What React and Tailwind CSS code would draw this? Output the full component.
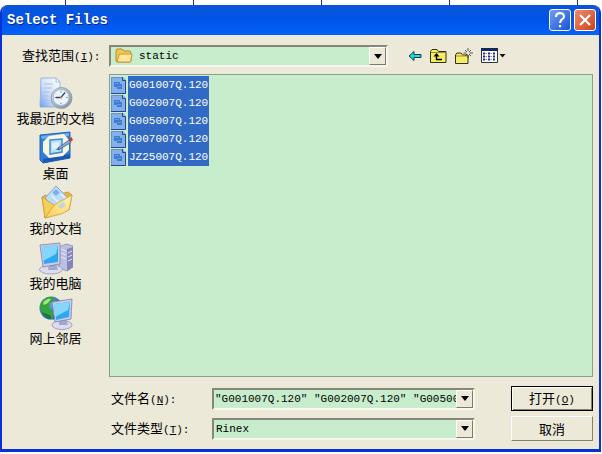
import { useState } from 'react';

const PlaceRecent = () => (
    <svg viewBox="0 0 34 34" className="w-[34px] h-[34px]" aria-hidden="true">
        <defs>
            <linearGradient id="recent-page" x1="0" y1="1" x2="1" y2="0">
                <stop offset="0" stopColor="#6f9fe8" />
                <stop offset=".45" stopColor="#cfe0f8" />
                <stop offset="1" stopColor="#fff" />
            </linearGradient>
            <linearGradient id="recent-rim" x1="0" y1="0" x2="1" y2="1">
                <stop offset="0" stopColor="#d8dfe8" />
                <stop offset="1" stopColor="#7f8b98" />
            </linearGradient>
        </defs>
        <path d="M2 2h15l4 4v25H1z" fill="url(#recent-page)" stroke="#8ba8d8" strokeWidth=".8" />
        <path d="M17 2v4h4z" fill="#fff" stroke="#8ba8d8" strokeWidth=".7" />
        <path d="M5 8h9M5 12h8M5 16h6M5 20h5M5 24h5" stroke="#a9bfe2" />
        <circle cx="22.500" cy="22" r="10.500" fill="url(#recent-rim)" stroke="#8c97a4" strokeWidth=".8" />
        <circle cx="22" cy="21.500" r="8" fill="#eaf5ff" stroke="#a4b8ce" />
        <path d="M22 15v1.600M22 26.500v1.500M15.500 21.500h1.600M27 21.500h1.600" stroke="#5b83bb" />
        <path d="M26 16.500l-4 5h-5" fill="none" stroke="#33475f" strokeWidth="1.300" />
        <circle cx="22" cy="21.500" r="1" fill="#d98339" />
    </svg>
);

const PlaceDesktop = () => (
    <svg viewBox="0 0 34 34" className="w-[34px] h-[34px]" aria-hidden="true">
        <path d="M1 4l30-3v26L4 32l-3-3z" fill="#2f7fdc" stroke="#2364b8" />
        <path d="M2 5l28-3v3L3 8z" fill="#6cb0f0" />
        <path d="M4 28l27-5v4L4 32z" fill="#1c58b4" />
        <path d="M10 5l15-2 5 6v10l-6 6-14 2-6-6V11z" fill="#faf8dc" />
        <path d="M11 9l12-1v13l-12 2z" fill="#b9def9" stroke="#3c8bd9" strokeWidth="1.500" />
        <path d="M13 12l7-1v4l-7 5z" fill="#e3f3fe" />
        <path d="M19 17l11-8 2 2.500-12 7z" fill="#8fa9d6" stroke="#3c5890" strokeWidth=".8" />
        <path d="M29.500 8l3-2 1.500 3-2.500 2z" fill="#c8402e" />
        <path d="M17 19l2.500-2 1 1.500z" fill="#23385f" />
    </svg>
);

const PlaceDocuments = () => (
    <svg viewBox="0 0 34 34" className="w-[34px] h-[34px]" aria-hidden="true">
        <defs>
            <linearGradient id="docs-flap" x1="0" y1="1" x2="1" y2="0">
                <stop offset="0" stopColor="#f7cf55" />
                <stop offset="1" stopColor="#fff3b8" />
            </linearGradient>
        </defs>
        <path d="M3 11l4-2 3 2 19-5 4 3-3 15-24 8z" fill="#e9b840" stroke="#b98a25" strokeWidth=".7" />
        <path d="M17 0l13 13-12 11L6 12z" fill="#bcdcf8" stroke="#81aad6" />
        <path d="M17 3l3.500 3.500-3.500 3.500-3.500-3.500z" fill="#7fb0e6" />
        <path d="M12 9l9 9M22 8l4 4" stroke="#e6f4ff" strokeWidth="1.500" />
        <path d="M3 11l3 21 8-10 1-3z" fill="#f5cf5c" stroke="#ca9a2d" strokeWidth=".7" />
        <path d="M6 32l9-13 18-10-3 15-8 4z" fill="url(#docs-flap)" stroke="#cfa13a" strokeWidth=".8" />
        <path d="M19 20l5-4 3 3-5 4z" fill="#bdd7df" />
    </svg>
);

const PlaceComputer = () => (
    <svg viewBox="0 0 34 34" className="w-[34px] h-[34px]" aria-hidden="true">
        <path d="M20 6l7-3 7 2v21l-6 4-8-3z" fill="#bcbfe0" stroke="#8184b2" strokeWidth=".7" />
        <path d="M28 8l6-2v20l-6 4z" fill="#8386ba" />
        <path d="M22 8l5 2M22 12l5 2M22 16l5 2M29 12l4-2M29 16l4-2M29 20l4-2" stroke="#e3e6fb" />
        <ellipse cx="12" cy="28.500" rx="11.500" ry="4.500" fill="#dcdcf0" stroke="#9496ba" strokeWidth=".8" />
        <path d="M10 23h7l2 6H9z" fill="#a5a7ce" />
        <path d="M1 4l20-2v21L4 26z" fill="#c9cde8" stroke="#7c80ac" strokeWidth=".8" />
        <path d="M3 6l16-2v17L5 23z" fill="#2fa8f2" />
        <path d="M3 6l16-2-2 9-13 7z" fill="#86d6fb" />
    </svg>
);

const PlaceNetwork = () => (
    <svg viewBox="0 0 34 34" className="w-[34px] h-[34px]" aria-hidden="true">
        <defs>
            <radialGradient id="globe" cx=".35" cy=".3" r=".75">
                <stop offset="0" stopColor="#6db4f5" />
                <stop offset="1" stopColor="#1450ac" />
            </radialGradient>
        </defs>
        <circle cx="12" cy="12" r="11.500" fill="url(#globe)" />
        <path d="M1 10C3 3 9 0 14 1l2 3-5 3-1 5 4 3v8c-8 0-13-6-13-13z" fill="#35a23c" />
        <path d="M4 7c2-3 5-5 8-4l-3 4-4 2z" fill="#a8e680" />
        <path d="M3 16c2 4 5 6 9 7v-3z" fill="#1d7340" />
        <ellipse cx="23" cy="29" rx="10" ry="4.500" fill="#dcdcf0" stroke="#9092b6" strokeWidth=".8" />
        <path d="M20 23h7l2 6h-9z" fill="#a5a7ce" />
        <path d="M13 6l20-3-1 20-16 3z" fill="#c9cde8" stroke="#7c80ac" strokeWidth=".8" />
        <path d="M15 8l16-2-1 15-13 3z" fill="#2fa8f2" />
        <path d="M15 8l16-2-2 8-13 7z" fill="#86d6fb" />
    </svg>
);

const FolderIcon = () => (
    <svg viewBox="0 0 18 16" className="w-[18px] h-4 shrink-0" aria-hidden="true">
        <path d="M1 3l1-2h5l2 2h6l1 2v8l-1 1H2l-1-1z" fill="#f2c74e" stroke="#b98a2c" />
        <path d="M2 14L4.500 6H17l-1.500 8z" fill="#ffe79a" stroke="#c49532" strokeWidth=".9" />
    </svg>
);

const FileIcon = () => (
    <svg viewBox="0 0 15 17" className="w-[15px] h-[17px] shrink-0" aria-hidden="true">
        <path d="M0 0h12l3 3v14H0z" fill="#86aeea" />
        <path d="M.5 17V.5H12" fill="none" stroke="#6890d8" />
        <path d="M11.500 0v3.500h3V16.500H0" fill="none" stroke="#244a86" />
        <path d="M3 5h6v2h2v5H6v-2H3z" fill="#3c7cd4" />
        <path d="M4 6.500h4M6 9.500h4" stroke="#5f9ae4" />
    </svg>
);

const BackIcon = () => (
    <svg viewBox="0 0 14 12" className="w-[14px] h-3" aria-hidden="true">
        <path d="M1 6l5-4.500V4.500h7v3H6v3z" fill="#18d7df" stroke="#143c48" />
    </svg>
);

const UpIcon = () => (
    <svg viewBox="0 0 17 15" className="w-[17px] h-[15px]" aria-hidden="true">
        <path d="M.5 13.500v-11l1.500-2h5l1.500 2h7.500v11z" fill="#f6ee62" stroke="#35310c" />
        <path d="M1 3.500h14" stroke="#9c932d" />
        <path d="M6.500 6v4.500H12" fill="none" stroke="#000" strokeWidth="1.400" />
        <path d="M3.500 7.500l3-3.500 3 3.500z" fill="#000" />
    </svg>
);

const NewFolderIcon = () => (
    <svg viewBox="0 0 18 17" className="w-[18px] h-[17px]" aria-hidden="true">
        <path d="M.5 15.500V7L2 5h4l1.500 2H13v8.500z" fill="#f6ee62" stroke="#35310c" />
        <path d="M1 8h11" stroke="#9c932d" />
        <path d="M13 0v3M13 7v3M8.500 5h3M14.500 5H18M10 2l2 2M16 2l-2 2M16 8l-2-2M10 8l2-2" stroke="#444" strokeWidth=".9" />
    </svg>
);

const ViewIcon = () => (
    <svg viewBox="0 0 25 16" className="w-[25px] h-4" aria-hidden="true">
        <path d="M.5.500h16v14H.500z" fill="#fff" stroke="#333" />
        <path d="M0 0h17v3H0z" fill="#14265e" />
        <path d="M2 5.500h2M7 5.500h2M12 5.500h2M2 8.500h2M7 8.500h2M12 8.500h2M2 11.500h2M7 11.500h2M12 11.500h2" stroke="#1c2a8c" strokeWidth="2" />
        <path d="M4.500 5.500h1.500M9.500 5.500h1.500M4.500 8.500h1.500M9.500 8.500h1.500M4.500 11.500h1.500M9.500 11.500h1.500" stroke="#888" />
        <path d="M18.500 6h6l-3 3.500z" fill="#111" />
    </svg>
);

const ArrowBox = () => (
    <span className="flex h-full w-[17px] items-center justify-center border border-t-[#fffef8] border-l-[#fffef8] border-r-[#7d796c] border-b-[#7d796c] bg-[#ece9d8]">
        <svg viewBox="0 0 8 5" className="w-2 h-[5px]" aria-hidden="true">
            <path d="M0 0h8L4 5z" fill="#000" />
        </svg>
    </span>
);

const sunken = 'border-2 border-t-[#85877b] border-l-[#85877b] border-r-[#f8f7ef] border-b-[#f8f7ef] bg-[#c7edcc]';
const mono = "font-['Liberation_Mono','Noto_Sans_CJK_SC',monospace] text-[11px]";

// Keyboard hint after a label, e.g. (N):
const Hint = ({ letter, colon }) => (
    <span className="font-['Liberation_Mono',monospace] text-[11px]">
        (<u className="underline-offset-1">{letter}</u>){colon && ':'}
    </span>
);

const Combo = ({ id, value, icon }) => (
    <div className={`relative flex h-[22px] min-w-0 flex-1 items-center ${sunken}`}>
        {icon && <span className="pl-1">{icon}</span>}
        <select
            id={id}
            defaultValue={value}
            className={`h-full min-w-0 flex-1 appearance-none bg-transparent outline-none ${icon ? 'pl-1.5' : 'pl-0.5'} ${mono}`}
        >
            <option>{value}</option>
        </select>
        <span className="pointer-events-none absolute inset-y-0 right-0">
            <ArrowBox />
        </span>
    </div>
);

const places = [
    { name: '我最近的文档', icon: PlaceRecent },
    { name: '桌面', icon: PlaceDesktop },
    { name: '我的文档', icon: PlaceDocuments },
    { name: '我的电脑', icon: PlaceComputer },
    { name: '网上邻居', icon: PlaceNetwork },
];

const files = ['G001007Q.120', 'G002007Q.120', 'G005007Q.120', 'G007007Q.120', 'JZ25007Q.120'];

const tools = [
    { label: '后退', icon: BackIcon },
    { label: '向上一级', icon: UpIcon },
    { label: '新建文件夹', icon: NewFolderIcon },
    { label: '查看', icon: ViewIcon },
];

const App = () => {
    const [selected, setSelected] = useState(files);
    const [fileName, setFileName] = useState(files.map(f => `"${f}"`).join(' '));

    const toggle = (file) => {
        const next = files.filter(f => (f === file ? !selected.includes(f) : selected.includes(f)));
        setSelected(next);
        setFileName(next.map(f => `"${f}"`).join(' '));
    };

    return (
        <div className="flex min-h-screen flex-col bg-white pr-px pb-[2px] font-['Noto_Sans_CJK_SC',sans-serif] text-[13px] leading-4 text-black">
            {/* Ruler marks above the window */}
            <div className="grid h-[5px] grid-cols-[65px_repeat(4,128px)_1fr]">
                <i />
                {[0, 1, 2, 3, 4].map(n => (
                    <i key={n} className="border-l border-[#27305c]" />
                ))}
            </div>

            <div className="flex flex-1 flex-col overflow-hidden rounded-t-lg border-x-2 border-b-[3px] border-[#0831d9] bg-[#ece9d8]">
                {/* Title bar */}
                <header className="flex h-[30px] items-center justify-between bg-linear-to-b from-[#0a55d8] via-[#0054e9] to-[#0462fa] pr-[3px] pl-[5px] text-white">
                    <h1 className="font-['Liberation_Mono',monospace] text-sm font-bold [text-shadow:1px_1px_#0a2a80]">Select Files</h1>
                    <div className="flex gap-[3px]">
                        <button aria-label="帮助" className="flex h-[22px] w-[22px] items-center justify-center rounded-[3px] border border-white bg-linear-to-br from-[#6f9df5] to-[#1c50d2]">
                            <svg viewBox="0 0 14 16" className="h-4 w-3.5" fill="none" stroke="#fff" strokeWidth="2.200">
                                <path d="M3 5c0-5 8-5 8-.5C11 7.500 7 7 7 11M7 13v2.200" />
                            </svg>
                        </button>
                        <button aria-label="关闭" className="flex h-[22px] w-[22px] items-center justify-center rounded-[3px] border border-white bg-linear-to-br from-[#ef8b6c] to-[#cf3d12]">
                            <svg viewBox="0 0 14 14" className="h-3.5 w-3.5" fill="none" stroke="#fff" strokeWidth="2.200">
                                <path d="M2 2l10 10M12 2L2 12" />
                            </svg>
                        </button>
                    </div>
                </header>

                <div className="flex flex-1 flex-col pr-[6px] pb-2">
                    {/* Look in */}
                    <div className="flex items-center pt-[10px] pb-[7px]">
                        <label htmlFor="look-in" className="w-[107px] shrink-0 pl-5">
                            查找范围<Hint letter="I" colon />
                        </label>
                        <Combo id="look-in" value="static" icon={<FolderIcon />} />
                        <div className="flex w-[205px] shrink-0 items-center gap-2 pl-5">
                            {tools.map(({ label, icon: Icon }) => (
                                <button key={label} aria-label={label}>
                                    <Icon />
                                </button>
                            ))}
                        </div>
                    </div>

                    <div className="flex flex-1">
                        {/* Places */}
                        <nav className="flex w-[107px] shrink-0 flex-col gap-1 pt-[2px]">
                            {places.map(({ name, icon: Icon }) => (
                                <button key={name} className="flex h-[51px] flex-col items-center">
                                    <Icon />
                                    <span>{name}</span>
                                </button>
                            ))}
                        </nav>

                        <div className="flex min-w-0 flex-1 flex-col">
                            <ul className="flex-1 border border-[#8b9d91] bg-[#c7edcc] p-px">
                                {files.map(file => (
                                    <li key={file} className="h-[18px]">
                                        <button
                                            onClick={() => toggle(file)}
                                            aria-pressed={selected.includes(file)}
                                            className={`flex h-[18px] items-center gap-[2px] ${mono}`}
                                        >
                                            <FileIcon />
                                            <span className={`flex h-[18px] items-center px-px ${selected.includes(file) ? 'bg-[#316ac5] text-white' : ''}`}>
                                                {file}
                                            </span>
                                        </button>
                                    </li>
                                ))}
                            </ul>

                            {/* File name, file type and actions */}
                            <div className="flex flex-col gap-[5px] pt-[9px]">
                                <div className="flex items-center">
                                    <label htmlFor="file-name" className="w-[103px] shrink-0 pl-[2px]">
                                        文件名<Hint letter="N" colon />
                                    </label>
                                    <div className={`flex h-[22px] min-w-0 flex-1 ${sunken}`}>
                                        <input
                                            id="file-name"
                                            value={fileName}
                                            onChange={e => setFileName(e.target.value)}
                                            className={`min-w-0 flex-1 bg-transparent pl-px outline-none ${mono}`}
                                        />
                                        <button aria-label="文件名列表">
                                            <ArrowBox />
                                        </button>
                                    </div>
                                    <button className="ml-9 h-[25px] w-[82px] border border-black bg-[#ece9d8] shadow-[inset_1px_1px_#fff,inset_-1px_-1px_#85816f]">
                                        打开<Hint letter="O" />
                                    </button>
                                </div>
                                <div className="flex items-center">
                                    <label htmlFor="file-type" className="w-[103px] shrink-0 pl-[2px]">
                                        文件类型<Hint letter="T" colon />
                                    </label>
                                    <Combo id="file-type" value="Rinex" />
                                    <button className="ml-9 h-[25px] w-[82px] border border-t-white border-l-white border-r-[#85816f] border-b-[#85816f] bg-[#ece9d8]">
                                        取消
                                    </button>
                                </div>
                            </div>
                        </div>
                    </div>
                </div>
            </div>
        </div>
    );
};

export default App;
